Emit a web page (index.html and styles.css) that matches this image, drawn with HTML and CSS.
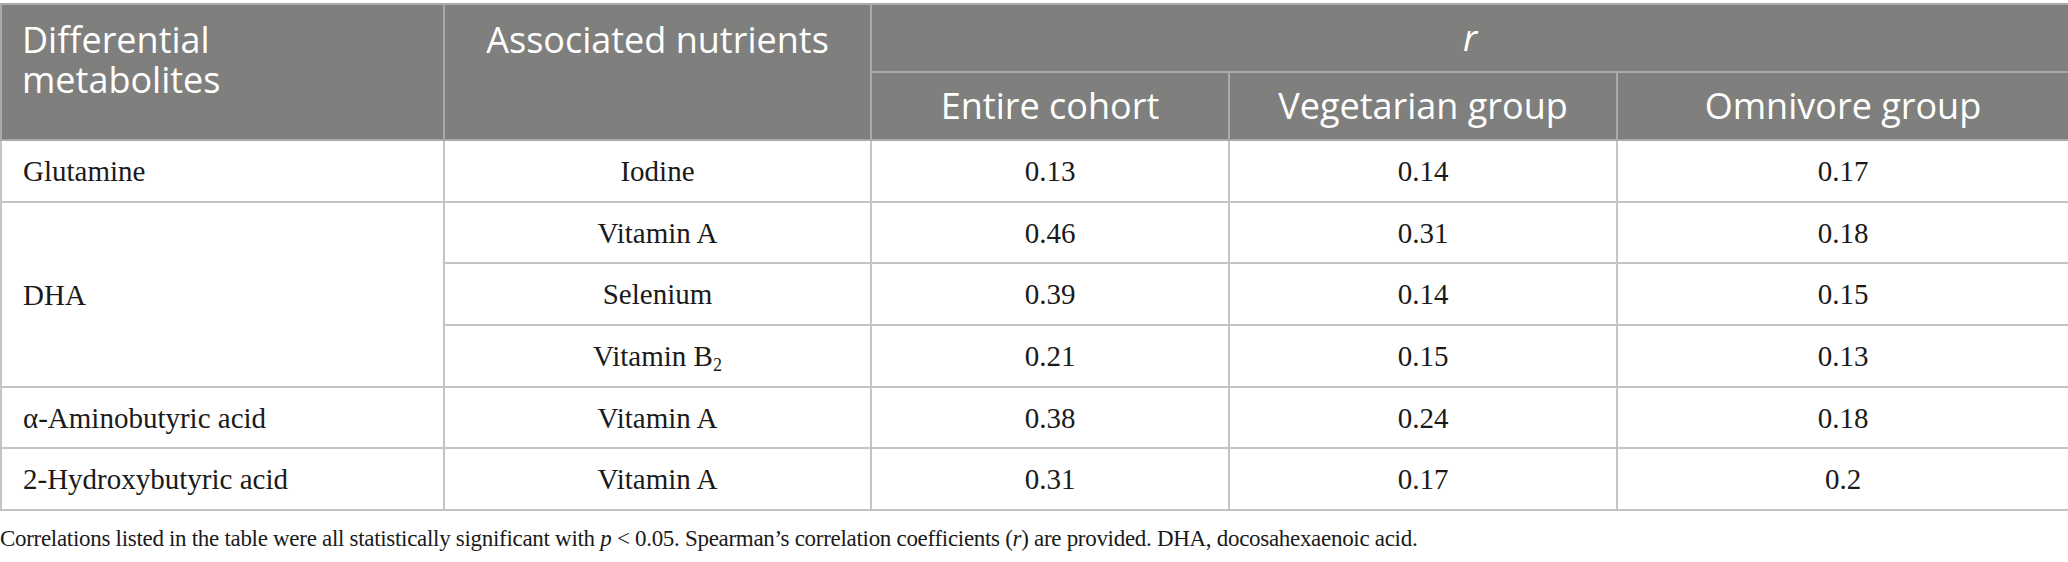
FILE: index.html
```html
<!DOCTYPE html>
<html lang="en">
<head>
<meta charset="utf-8">
<title>Correlations between differential metabolites and nutrients</title>
<link rel="stylesheet" href="styles.css">
</head>
<body>
<div class="wrap">
  <table class="data">
    <colgroup>
      <col class="c1">
      <col class="c2">
      <col class="c3">
      <col class="c4">
      <col class="c5">
    </colgroup>
    <thead>
      <tr class="h1">
        <th rowspan="2" class="th-left">Differential metabolites</th>
        <th rowspan="2" class="th-top">Associated nutrients</th>
        <th colspan="3" class="th-mid"><i>r</i></th>
      </tr>
      <tr class="h2">
        <th class="th-mid">Entire cohort</th>
        <th class="th-mid">Vegetarian group</th>
        <th class="th-mid">Omnivore group</th>
      </tr>
    </thead>
    <tbody>
      <tr class="r62">
        <td class="left">Glutamine</td>
        <td>Iodine</td>
        <td>0.13</td>
        <td>0.14</td>
        <td>0.17</td>
      </tr>
      <tr class="r61">
        <td class="left" rowspan="3">DHA</td>
        <td>Vitamin A</td>
        <td>0.46</td>
        <td>0.31</td>
        <td>0.18</td>
      </tr>
      <tr class="r62">
        <td>Selenium</td>
        <td>0.39</td>
        <td>0.14</td>
        <td>0.15</td>
      </tr>
      <tr class="r62">
        <td>Vitamin B<sub>2</sub></td>
        <td>0.21</td>
        <td>0.15</td>
        <td>0.13</td>
      </tr>
      <tr class="r61">
        <td class="left">α-Aminobutyric acid</td>
        <td>Vitamin A</td>
        <td>0.38</td>
        <td>0.24</td>
        <td>0.18</td>
      </tr>
      <tr class="r62">
        <td class="left">2-Hydroxybutyric acid</td>
        <td>Vitamin A</td>
        <td>0.31</td>
        <td>0.17</td>
        <td>0.2</td>
      </tr>
    </tbody>
  </table>
  <p class="note">Correlations listed in the table were all statistically significant with <i>p</i> &lt; 0.05. Spearman’s correlation coefficients (<i>r</i>) are provided. DHA, docosahexaenoic acid.</p>
</div>
</body>
</html>
```

FILE: styles.css
```css
html, body {
  margin: 0;
  padding: 0;
  background: #ffffff;
}

.wrap {
  padding-top: 3px;
  width: 2068px;
}

.data {
  width: 2068px;
  border-collapse: collapse;
  table-layout: fixed;
  font-family: "Liberation Serif", "Times New Roman", serif;
  font-size: 29px;
  color: #1a1a1a;
}

.c1 { width: 443px; }
.c2 { width: 427px; }
.c3 { width: 358px; }
.c4 { width: 388px; }
.c5 { width: 452px; }

.data th,
.data td {
  border: 2px solid #c4c4c4;
  padding: 0;
}

.data th {
  background: #7f807e;
  color: #ffffff;
  font-family: "Open Sans", "Liberation Sans", sans-serif;
  font-weight: 400;
  font-size: 36px;
  line-height: 40px;
  text-align: center;
  border-color: #a9aaa8;
}

.h1 { height: 68px; }
.h2 { height: 68px; }

.th-left {
  text-align: left !important;
  vertical-align: top;
  padding: 15px 120px 0 20px !important;
}

.th-top {
  vertical-align: top;
  padding-top: 15px !important;
}

.th-mid {
  vertical-align: middle;
}

.th-mid i {
  font-style: italic;
}

.data td {
  text-align: center;
  vertical-align: middle;
  line-height: 34px;
}

.data td.left {
  text-align: left;
  padding-left: 21px;
}

.r62 { height: 62px; }
.r61 { height: 61px; }

sub {
  font-size: 18px;
  line-height: 0;
  vertical-align: -5px;
}

.note {
  margin: 12px 0 0 0;
  font-family: "Liberation Serif", "Times New Roman", serif;
  font-size: 23px;
  letter-spacing: -0.3px;
  line-height: 32px;
  color: #1a1a1a;
}
```
